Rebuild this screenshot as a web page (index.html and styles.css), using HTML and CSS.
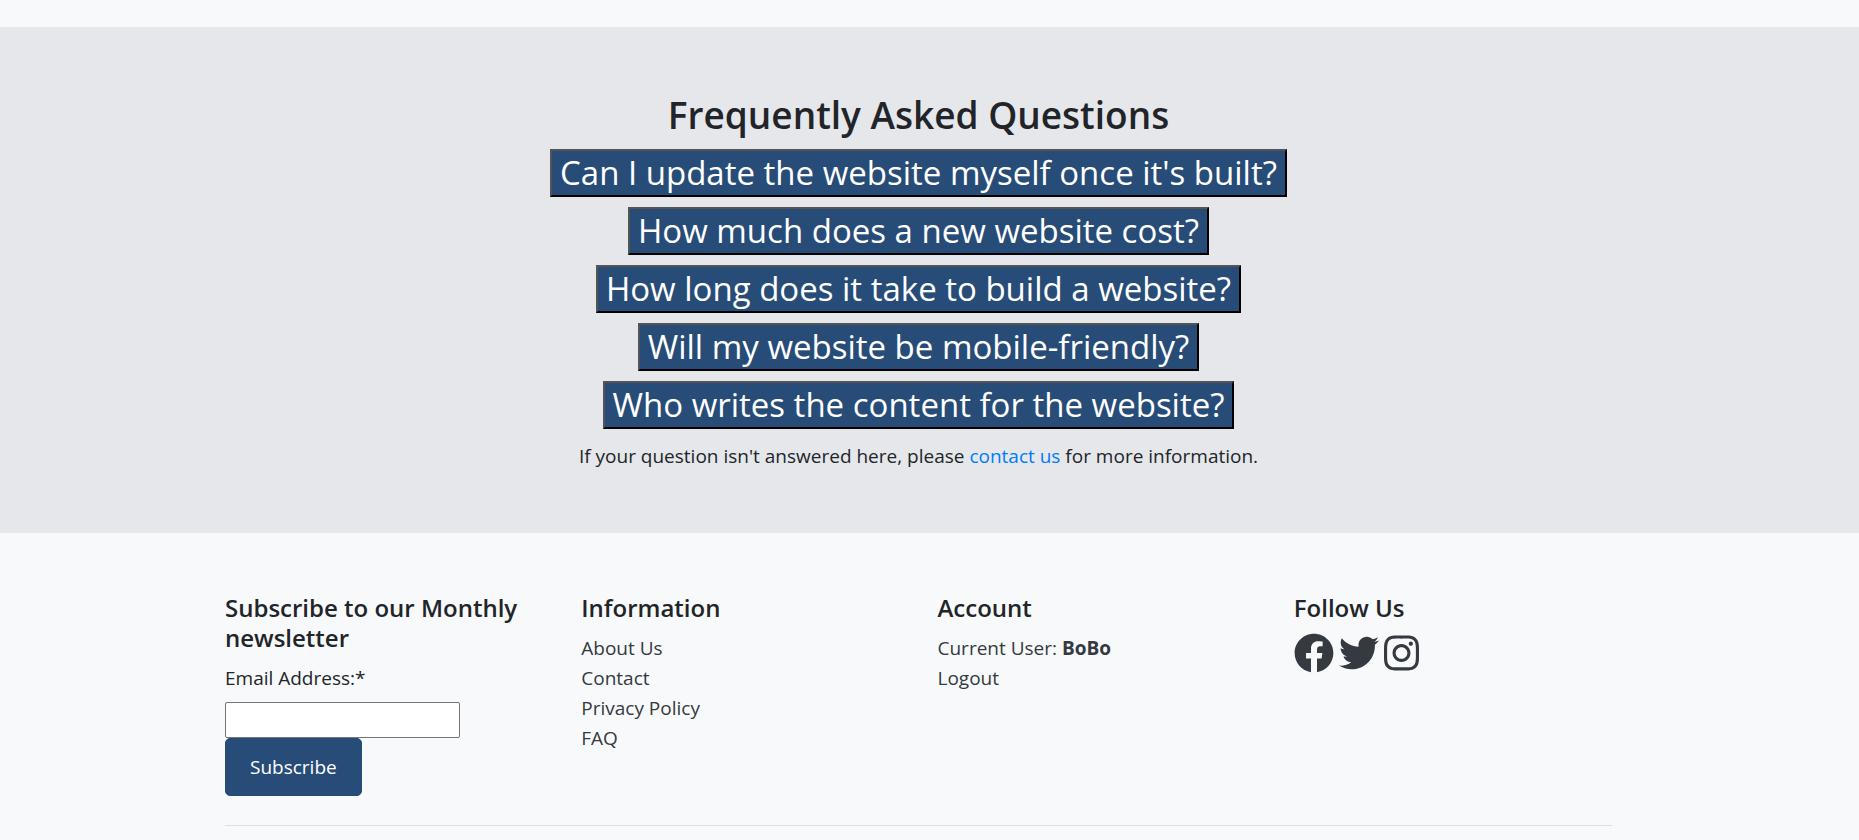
FILE: index.html
```html
<!DOCTYPE html>
<html lang="en">
<head>
<meta charset="utf-8">
<meta name="viewport" content="width=device-width, initial-scale=1">
<title>Frequently Asked Questions</title>
<link rel="stylesheet" href="styles.css">
</head>
<body>
<main class="faq">
  <h2 class="faq-title">Frequently Asked Questions</h2>
  <div class="faq-list">
    <button class="question" type="button">Can I update the website myself once it's built?</button>
    <button class="question" type="button">How much does a new website cost?</button>
    <button class="question" type="button">How long does it take to build a website?</button>
    <button class="question" type="button">Will my website be mobile-friendly?</button>
    <button class="question" type="button">Who writes the content for the website?</button>
  </div>
  <p class="faq-note">If your question isn't answered here, please <a href="#contact">contact us</a> for more information.</p>
</main>
<footer class="footer">
  <div class="footer-inner">
    <div class="footer-columns">
      <form class="newsletter">
        <h4 class="column-title">Subscribe to our Monthly newsletter</h4>
        <label class="email-label" for="email">Email Address:*</label>
        <input class="email-input" id="email" type="email" required>
        <button class="subscribe" type="submit">Subscribe</button>
      </form>
      <section>
        <h4 class="column-title">Information</h4>
        <ul class="links">
          <li><a href="#about">About Us</a></li>
          <li><a href="#contact">Contact</a></li>
          <li><a href="#privacy">Privacy Policy</a></li>
          <li><a href="#faq">FAQ</a></li>
        </ul>
      </section>
      <section>
        <h4 class="column-title">Account</h4>
        <ul class="links">
          <li><a href="#profile">Current User: <strong>BoBo</strong></a></li>
          <li><a href="#logout">Logout</a></li>
        </ul>
      </section>
      <section>
        <h4 class="column-title">Follow Us</h4>
        <div class="social">
          <a href="#facebook" aria-label="Facebook"><svg class="icon" viewBox="0 0 512 512"><path d="M504 256C504 119 393 8 256 8S8 119 8 256c0 123.78 90.69 226.38 209.25 245V327.69h-63V256h63v-54.64c0-62.15 37-96.48 93.67-96.48 27.14 0 55.52 4.84 55.52 4.84v61h-31.28c-30.8 0-40.41 19.12-40.41 38.73V256h68.78l-11 71.69h-57.78V501C413.31 482.38 504 379.78 504 256z"/></svg></a>
          <a href="#twitter" aria-label="Twitter"><svg class="icon" viewBox="0 0 512 512"><path d="M459.37 151.716c.325 4.548.325 9.097.325 13.645 0 138.72-105.583 298.558-298.558 298.558-59.452 0-114.68-17.219-161.137-47.106 8.447.974 16.568 1.299 25.34 1.299 49.055 0 94.213-16.568 130.274-44.832-46.132-.975-84.792-31.188-98.112-72.772 6.498.974 12.995 1.624 19.818 1.624 9.421 0 18.843-1.3 27.614-3.573-48.081-9.747-84.143-51.98-84.143-102.985v-1.299c13.969 7.797 30.214 12.67 47.431 13.319-28.264-18.843-46.781-51.005-46.781-87.391 0-19.492 5.197-37.36 14.294-52.954 51.655 63.675 129.3 105.258 216.365 109.807-1.624-7.797-2.599-15.918-2.599-24.04 0-57.828 46.782-104.934 104.934-104.934 30.213 0 57.502 12.67 76.67 33.137 23.715-4.548 46.456-13.32 66.599-25.34-7.798 24.366-24.366 44.833-46.132 57.827 21.117-2.273 41.584-8.122 60.426-16.243-14.292 20.791-32.161 39.308-52.628 54.253z"/></svg></a>
          <a href="#instagram" aria-label="Instagram"><svg class="icon icon-narrow" viewBox="0 0 448 512"><path d="M224.1 141c-63.6 0-114.9 51.3-114.9 114.9s51.3 114.9 114.9 114.9S339 319.5 339 255.9 287.7 141 224.1 141zm0 189.6c-41.1 0-74.7-33.5-74.7-74.7s33.5-74.7 74.7-74.7 74.7 33.5 74.7 74.7-33.6 74.7-74.7 74.7zm146.4-194.3c0 14.9-12 26.8-26.8 26.8-14.9 0-26.8-12-26.8-26.8s12-26.8 26.8-26.8 26.8 12 26.8 26.8zm76.1 27.2c-1.7-35.9-9.9-67.7-36.2-93.9-26.2-26.2-58-34.4-93.9-36.2-37-2.1-147.9-2.1-184.9 0-35.8 1.7-67.6 9.9-93.9 36.1s-34.4 58-36.2 93.9c-2.1 37-2.1 147.9 0 184.9 1.7 35.9 9.9 67.7 36.2 93.9s58 34.4 93.9 36.2c37 2.1 147.9 2.1 184.9 0 35.9-1.7 67.7-9.9 93.9-36.2 26.2-26.2 34.4-58 36.2-93.9 2.1-37 2.1-147.8 0-184.8zM398.8 388c-7.8 19.6-22.9 34.7-42.6 42.6-29.5 11.7-99.5 9-132.1 9s-102.7 2.6-132.1-9c-19.6-7.8-34.7-22.9-42.6-42.6-11.7-29.5-9-99.5-9-132.1s-2.6-102.7 9-132.1c7.8-19.6 22.9-34.7 42.6-42.6 29.5-11.7 99.5-9 132.1-9s102.7-2.6 132.1 9c19.6 7.8 34.7 22.9 42.6 42.6 11.7 29.5 9 99.5 9 132.1s2.7 102.7-9 132.1z"/></svg></a>
        </div>
      </section>
    </div>
    <hr class="divider">
  </div>
</footer>
</body>
</html>
```
FILE: styles.css
```css
* {
  box-sizing: border-box;
}

body {
  margin: 0;
  padding-top: 27px;
  background: #f8f9fb;
  color: #212529;
  font-family: "Segoe UI", "Open Sans", "Noto Sans", sans-serif;
  font-size: 19px;
  line-height: 30px;
}

a {
  color: #007bff;
  text-decoration: none;
}

.faq {
  padding: 64px 22px 62px 0;
  background: #e6e7ea;
  text-align: center;
}

.faq-title {
  margin: 0 0 10px;
  font-size: 37px;
  font-weight: 600;
  line-height: 48px;
}

.faq-list {
  display: flex;
  flex-direction: column;
  align-items: center;
  gap: 10px;
}

.question {
  padding: 0 8px;
  border: 2px outset #000;
  background: #274c77;
  color: #fff;
  font-family: inherit;
  font-size: 33px;
  line-height: 44px;
}

.faq-note {
  margin: 12px 0 0;
}

.footer {
  padding: 60px 22px 14px 0;
}

.footer-inner {
  max-width: 1425px;
  margin: 0 auto;
  padding: 0 19px;
}

.footer-columns {
  display: grid;
  grid-template-columns: repeat(4, 1fr);
  column-gap: 38px;
}

.column-title {
  margin: 0 0 10px;
  font-size: 24px;
  font-weight: 600;
  line-height: 30px;
}

.newsletter {
  display: flex;
  flex-direction: column;
  align-items: flex-start;
}

.email-label {
  margin-bottom: 9px;
}

.email-input {
  width: 235px;
  max-width: 100%;
  height: 36px;
  padding: 2px;
  border: 1px solid #767676;
  border-radius: 2px;
  background: #fff;
  font: inherit;
}

.subscribe {
  padding: 13px 24px;
  border: 1px solid #274c77;
  border-radius: 5px;
  background: #274c77;
  color: #fff;
  font: inherit;
}

.links {
  margin: 0;
  padding: 0;
  list-style: none;
}

.links a {
  color: #343a40;
}

.social {
  display: flex;
  gap: 5px;
}

.social a {
  display: flex;
}

.icon {
  width: 40px;
  height: 40px;
  fill: #343a40;
}

.icon-narrow {
  width: 35px;
}

.divider {
  margin: 29px 0 0;
  border: 0;
  border-top: 1px solid #dedfe2;
}
```
